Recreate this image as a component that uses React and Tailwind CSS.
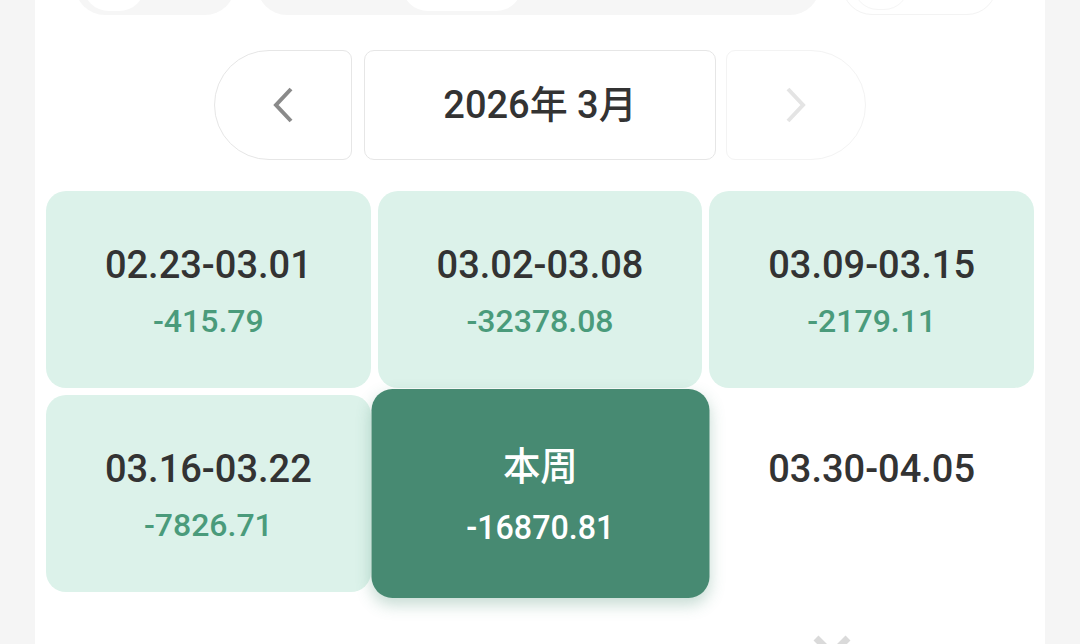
import React from 'react';

const weeks = [
  { label: '02.23-03.01', amount: '-415.79' },
  { label: '03.02-03.08', amount: '-32378.08' },
  { label: '03.09-03.15', amount: '-2179.11' },
  { label: '03.16-03.22', amount: '-7826.71' },
  { label: '本周', amount: '-16870.81', current: true },
  { label: '03.30-04.05', amount: null },
];

function WeekCard({ week }) {
  if (week.current) {
    return (
      <div className="h-[197px] rounded-[20px] bg-[#478a72] scale-x-[1.04] scale-y-[1.06] shadow-[0_6px_14px_rgba(71,138,114,0.3)] flex flex-col items-center pt-[55px] text-white">
        <div className="text-[36px] leading-[38px] font-medium">{week.label}</div>
        <div className="text-[31px] leading-[31px] mt-[22px] font-medium">{week.amount}</div>
      </div>
    );
  }
  return (
    <div
      className={`h-[197px] rounded-[20px] flex flex-col items-center pt-[55px] ${
        week.amount ? 'bg-[#dcf2ea]' : 'bg-white'
      }`}
    >
      <div className="text-[38px] leading-[38px] font-medium text-[#333]">{week.label}</div>
      {week.amount && (
        <div className="text-[32px] leading-[31px] mt-[22px] font-medium text-[#4a9b7b]">{week.amount}</div>
      )}
    </div>
  );
}

export default function App() {
  return (
    <div
      className="h-[644px] overflow-hidden bg-[#f5f5f5] flex justify-center"
      style={{ fontFamily: 'Roboto, "Noto Sans CJK SC", sans-serif' }}
    >
      <div className="w-[1010px] bg-white">
        {/* top row, mostly scrolled away */}
        <div className="flex items-end gap-[22px] pl-[40px] h-[60px] -mt-[45px]">
          <div className="w-[160px] h-[60px] rounded-full bg-[#f6f6f6] flex items-center pl-[8px]">
            <div className="w-[62px] h-[52px] rounded-full bg-white" />
          </div>
          <div className="w-[563px] h-[60px] rounded-full bg-[#f6f6f6] flex items-center pl-[145px]">
            <div className="w-[120px] h-[52px] rounded-full bg-white" />
          </div>
          <div className="w-[155px] h-[60px] rounded-full border border-[#f3f3f3] flex items-center pl-[10px]">
            <div className="w-[56px] h-[50px] rounded-full border border-[#f5f5f5]" />
          </div>
        </div>

        {/* month switcher */}
        <div className="flex justify-center mt-[35px] h-[110px]">
          <button className="w-[138px] h-[110px] rounded-l-[55px] rounded-r-[9px] border border-[#e6e6e6] flex items-center justify-center">
            <svg width="26" height="38" viewBox="0 0 26 38" fill="none">
              <path d="M21 3 L6 19 L21 35" stroke="#8a8a8a" strokeWidth="4" />
            </svg>
          </button>
          <div className="w-[352px] h-[110px] ml-[12px] rounded-[10px] border border-[#e6e6e6] flex items-center justify-center text-[38px] font-medium text-[#333]">
            2026年 3月
          </div>
          <button className="w-[140px] h-[110px] ml-[10px] rounded-r-[55px] rounded-l-[9px] border border-[#f3f3f3] flex items-center justify-center">
            <svg width="26" height="38" viewBox="0 0 26 38" fill="none">
              <path d="M5 3 L20 19 L5 35" stroke="#e4e4e4" strokeWidth="4" />
            </svg>
          </button>
        </div>

        {/* weeks */}
        <div className="grid grid-cols-3 gap-[7px] px-[11px] mt-[31px]">
          {weeks.map((w) => (
            <WeekCard key={w.label} week={w} />
          ))}
        </div>

        <div className="flex justify-end pr-[193px] mt-[42px]">
          <svg width="40" height="40" viewBox="0 0 40 40" fill="none">
            <path d="M4 4 L36 36 M36 4 L4 36" stroke="#dadada" strokeWidth="7" />
          </svg>
        </div>
      </div>
    </div>
  );
}
